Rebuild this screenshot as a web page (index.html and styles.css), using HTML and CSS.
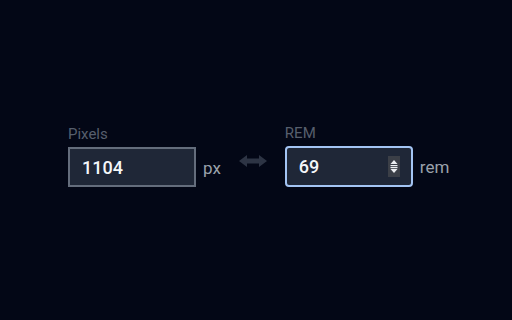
FILE: index.html
```html
<!DOCTYPE html>
<html>
<head>
<meta charset="utf-8">
<link rel="stylesheet" href="styles.css">
</head>
<body>
<main class="converter">
  <div class="field">
    <div class="label">Pixels</div>
    <div class="row">
      <div class="input">1104</div>
      <span class="unit">px</span>
    </div>
  </div>
  <svg class="swap" width="28" height="12" viewBox="0 0 28 12"><path d="M0 6 L8 0 L8 3.5 L20 3.5 L20 0 L28 6 L20 12 L20 8.5 L8 8.5 L8 12 Z" fill="#2d3444"/></svg>
  <div class="field">
    <div class="label">REM</div>
    <div class="row">
      <div class="input focused">
        <span>69</span>
        <svg class="spin" width="12" height="21" viewBox="0 0 12 21"><rect width="12" height="21" fill="#3b3f47"/><path d="M6 4 L9.5 8 L2.5 8 Z" fill="#eceef1"/><rect x="2.5" y="9" width="7" height="1.2" fill="#eceef1"/><rect x="2.5" y="11" width="7" height="1.2" fill="#eceef1"/><path d="M2.5 13 L9.5 13 L6 17 Z" fill="#eceef1"/></svg>
      </div>
      <span class="unit">rem</span>
    </div>
  </div>
</main>
</body>
</html>
```
FILE: styles.css
```css
html, body {
  margin: 0;
  height: 100%;
  background: #030716;
}
body {
  font-family: Roboto, "Liberation Sans", sans-serif;
}
.converter {
  display: flex;
  align-items: flex-end;
  padding: 124px 0 0 68px;
}
.field {
  display: flex;
  flex-direction: column;
}
.label {
  font-size: 15px;
  line-height: 18px;
  color: #575f6d;
  margin-bottom: 4px;
}
.row {
  display: flex;
  align-items: center;
}
.input {
  box-sizing: border-box;
  width: 128px;
  height: 40px;
  border: 2px solid #646d7c;
  background: #1f2737;
  color: #f4f6f9;
  font-size: 18px;
  font-weight: 500;
  padding: 0 12px;
  display: flex;
  align-items: center;
  justify-content: space-between;
}
.input.focused {
  height: 41px;
  border-color: #a3c4f3;
  border-radius: 4px;
  padding-right: 11px;
}
.unit {
  font-size: 17px;
  color: #9aa1ab;
  margin-left: 7px;
  padding-top: 1px;
}
.swap {
  display: block;
  margin: 0 18px 20px 18px;
}
```
